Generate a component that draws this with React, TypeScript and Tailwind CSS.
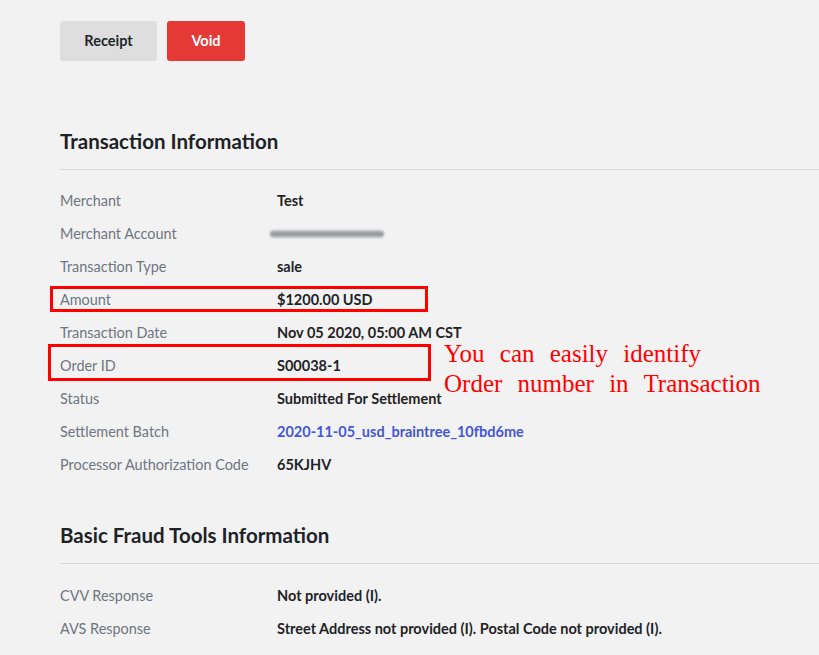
import React from "react";

const txRows = [
  { label: "Merchant", value: "Test" },
  { label: "Merchant Account", value: "", blurred: true },
  { label: "Transaction Type", value: "sale" },
  { label: "Amount", value: "$1200.00 USD", box: "amount" },
  { label: "Transaction Date", value: "Nov 05 2020, 05:00 AM CST" },
  { label: "Order ID", value: "S00038-1", box: "order" },
  { label: "Status", value: "Submitted For Settlement" },
  { label: "Settlement Batch", value: "2020-11-05_usd_braintree_10fbd6me", link: true },
  { label: "Processor Authorization Code", value: "65KJHV" },
];

const fraudRows = [
  { label: "CVV Response", value: "Not provided (I)." },
  { label: "AVS Response", value: "Street Address not provided (I). Postal Code not provided (I)." },
];

type Row = { label: string; value: string; blurred?: boolean; box?: string; link?: boolean };

const InfoRow = ({ row }: { row: Row }) => (
  <div className="relative flex h-[33px] items-center">
    <div className="w-[217px] text-[14.45px] text-[#6e7681]">{row.label}</div>
    {row.blurred ? (
      <div className="ml-[-7px] h-[8px] w-[114px] rounded-full bg-gradient-to-b from-[#c8cbcc] via-[#8a8f90] to-[#c8cbcc] blur-[1px]" />
    ) : (
      <div className={row.link ? "text-[14.5px] font-bold text-[#4458d1]" : "text-[14.5px] font-bold text-[#1f2326]"}>
        {row.value}
      </div>
    )}
    {row.box === "amount" && (
      <div className="absolute left-[-10px] top-[3px] h-[26px] w-[378px] border-[3px] border-[#ff0000]" />
    )}
    {row.box === "order" && (
      <>
        <div className="absolute left-[-12px] top-[-5px] h-[37px] w-[383px] border-[3px] border-[#ff0000]" />
        <div
          className="absolute left-[384px] top-[-10px] text-[25px] leading-[30px] text-[#ff0000] whitespace-nowrap [word-spacing:9px]"
          style={{ fontFamily: '"Liberation Serif", serif' }}
        >
          <div>You can easily identify</div>
          <div>Order number in Transaction</div>
        </div>
      </>
    )}
  </div>
);

export default function App() {
  return (
    <div
      className="min-h-[655px] w-full overflow-hidden bg-[#f2f2f2] pl-[60px]"
      style={{ fontFamily: 'Lato, "Open Sans", sans-serif' }}
    >
      <div className="flex gap-[10px] pt-[21px]">
        <button className="h-[40px] w-[97px] rounded-[3px] bg-[#dedede] text-[14.5px] font-bold text-[#22272b]">
          Receipt
        </button>
        <button className="h-[40px] w-[78px] rounded-[3px] bg-[#e53935] text-[14.5px] font-bold text-white">
          Void
        </button>
      </div>

      <h2 className="mt-[66px] text-[20.5px] font-bold leading-[28px] text-[#1e2226]">Transaction Information</h2>
      <div className="mt-[14px] border-t border-[#d9d9d9]" />
      <div className="pt-[14px]">
        {txRows.map((r) => (
          <InfoRow key={r.label} row={r} />
        ))}
      </div>

      <h2 className="mt-[40px] text-[20.5px] font-bold leading-[28px] text-[#1e2226]">Basic Fraud Tools Information</h2>
      <div className="mt-[14px] border-t border-[#d9d9d9]" />
      <div className="pt-[15px]">
        {fraudRows.map((r) => (
          <InfoRow key={r.label} row={r} />
        ))}
      </div>
    </div>
  );
}
